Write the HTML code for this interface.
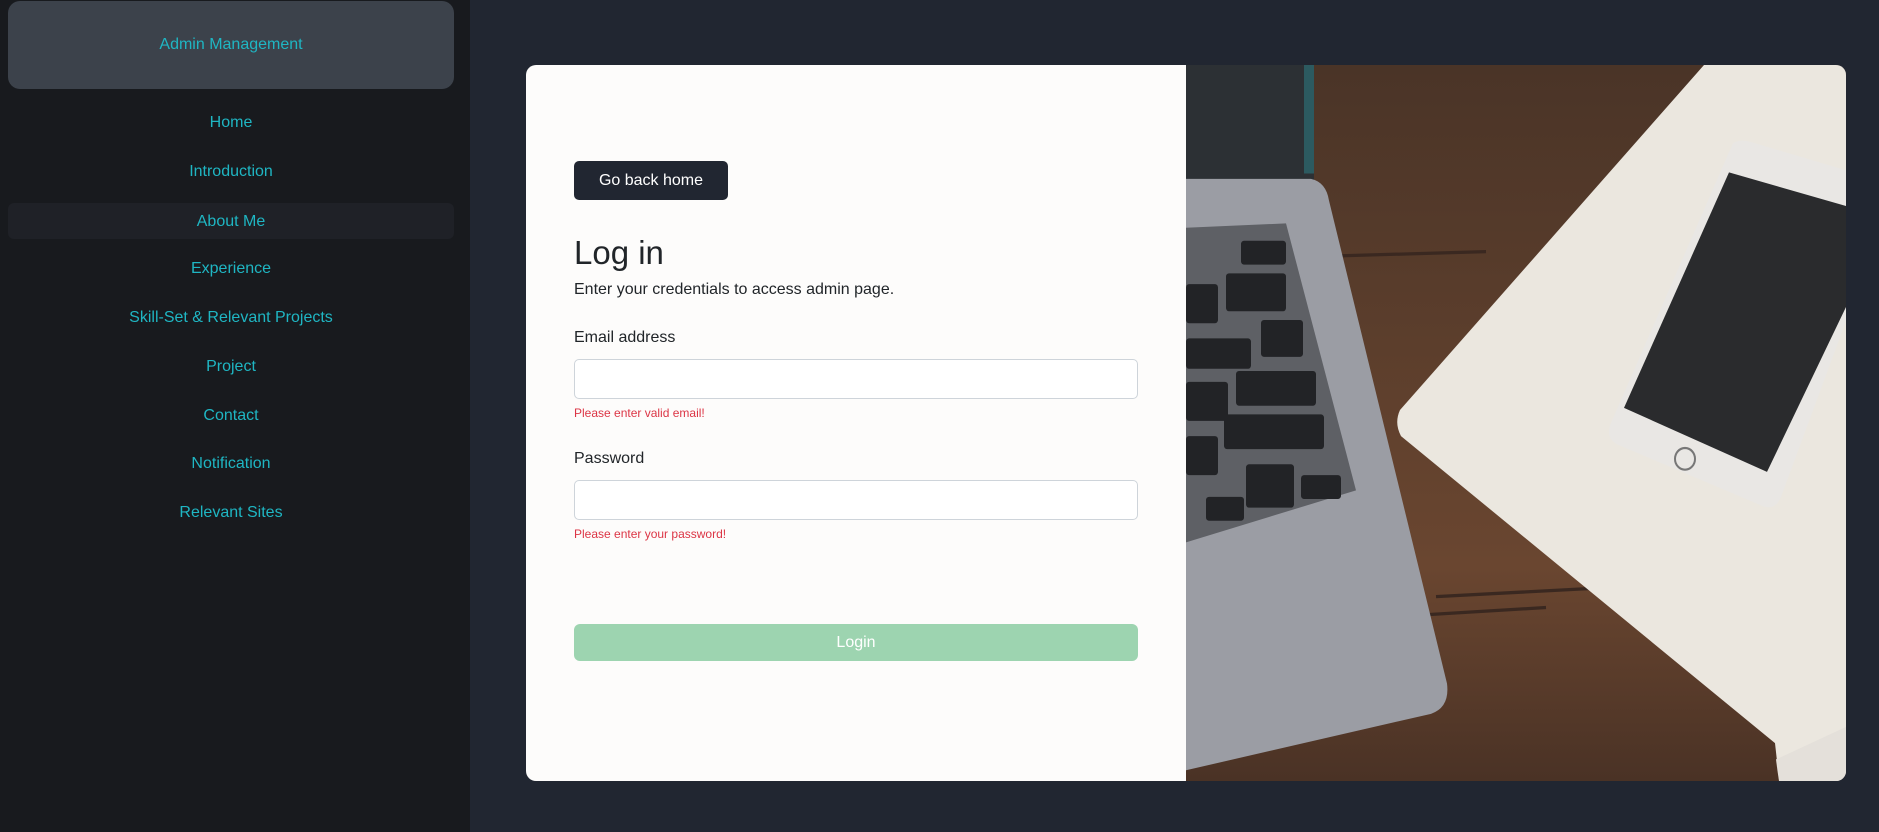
<!DOCTYPE html>
<html><head><meta charset="utf-8"><style>
*{box-sizing:border-box;margin:0;padding:0}
body{width:1879px;height:832px;background:#212631;font-family:"Liberation Sans","Noto Sans CJK KR",sans-serif;position:relative;overflow:hidden}
.side{position:absolute;left:0;top:0;width:470px;height:832px;background:#181a1e}
.hdr{position:absolute;left:8px;top:1px;width:446px;height:88px;background:#3c424b;border-radius:12px;color:#1fb6c3;font-size:16px;text-align:center;line-height:88px}
.nav{position:absolute;left:8px;width:446px;height:36px;line-height:38px;text-align:center;color:#1fb6c3;font-size:16px;border-radius:6px}
.card{position:absolute;left:526px;top:65px;width:1320px;height:716px;border-radius:10px;overflow:hidden;background:#fdfcfb}
.l{position:absolute;left:48px;color:#212529}
.btn{position:absolute;left:48px;top:96px;width:154px;height:39px;background:#212631;border-radius:5px;color:#fff;font-size:16px;text-align:center;line-height:39px}
.inp{position:absolute;left:48px;width:564px;height:40px;border:1px solid #ced4da;border-radius:5px;background:#fff}
.err{position:absolute;left:48px;color:#dc3545;font-size:12px}
.login{position:absolute;left:48px;top:559px;width:564px;height:37px;background:#9dd4b0;border-radius:6px;color:#fff;font-size:16px;text-align:center;line-height:37px}
</style></head><body>
<div class="side">
<div class="hdr">Admin Management</div>
<div class="nav" style="top:104px">Home</div>
<div class="nav" style="top:153px">Introduction</div>
<div class="nav" style="top:203px;background:#1f2127">About Me</div>
<div class="nav" style="top:250px">Experience</div>
<div class="nav" style="top:299px">Skill-Set &amp; Relevant Projects</div>
<div class="nav" style="top:348px">Project</div>
<div class="nav" style="top:397px">Contact</div>
<div class="nav" style="top:445px">Notification</div>
<div class="nav" style="top:494px">Relevant Sites</div>
</div>
<div class="card">
<div class="btn">Go back home</div>
<div class="l" style="top:169px;font-size:33px">Log in</div>
<div class="l" style="top:216px;font-size:16px">Enter your credentials to access admin page.</div>
<div class="l" style="top:264px;font-size:16px">Email address</div>
<div class="inp" style="top:294px"></div>
<div class="err" style="top:341px">Please enter valid email!</div>
<div class="l" style="top:385px;font-size:16px">Password</div>
<div class="inp" style="top:415px"></div>
<div class="err" style="top:462px">Please enter your password!</div>
<div class="login">Login</div>
<svg style="position:absolute;left:660px;top:0" width="660" height="716" viewBox="0 0 660 716">
<defs><linearGradient id="w" x1="0" y1="0" x2="0" y2="1"><stop offset="0" stop-color="#4a3427"/><stop offset=".7" stop-color="#6a4630"/><stop offset="1" stop-color="#4a3225"/></linearGradient></defs>
<rect width="660" height="716" fill="url(#w)"/>
<g transform="scale(1,1.085)">
<path d="M0 180 L300 172 M0 520 L360 500 M250 490 L660 470" stroke="#3a2820" stroke-width="3"/>
<rect x="0" y="0" width="128" height="108" fill="#2c3034"/>
<rect x="118" y="0" width="10" height="100" fill="#2c5a60"/>
<path d="M0 105 L125 105 Q140 108 143 125 L261 570 Q264 592 245 598 L0 650 Z" fill="#9b9da4"/>
<path d="M0 150 L100 146 L170 392 L0 440 Z" fill="#5e6065"/>
<g fill="#222326">
<rect x="55" y="162" width="45" height="22" rx="3"/><rect x="40" y="192" width="60" height="35" rx="3"/>
<rect x="75" y="235" width="42" height="34" rx="3"/><rect x="50" y="282" width="80" height="32" rx="3"/>
<rect x="38" y="322" width="100" height="32" rx="3"/><rect x="60" y="368" width="48" height="40" rx="3"/>
<rect x="115" y="378" width="40" height="22" rx="3"/><rect x="0" y="202" width="32" height="36" rx="3"/>
<rect x="0" y="252" width="65" height="28" rx="3"/><rect x="0" y="292" width="42" height="36" rx="3"/>
<rect x="0" y="342" width="32" height="36" rx="3"/><rect x="20" y="398" width="38" height="22" rx="3"/>
</g>
<path d="M518 0 L660 0 L660 716 L600 716 L589 625 L215 342 Q208 330 214 318 Z" fill="#ebe7df"/>
<path d="M590 640 Q600 716 620 716 L660 716 L660 610 Z" fill="#e4e0da"/>
<path d="M547 72 Q555 68 565 71 L660 97 L660 236 L595 398 Q590 410 578 407 L432 350 Q420 345 424 332 Z" fill="#e9e7e4"/>
<path d="M543 99 L660 130 L660 223 L581 375 L438 316 Z" fill="#2a2b2d"/>
<circle cx="499" cy="363" r="10" fill="none" stroke="#777" stroke-width="2"/>
</g>
</svg>
</div>
</body></html>
